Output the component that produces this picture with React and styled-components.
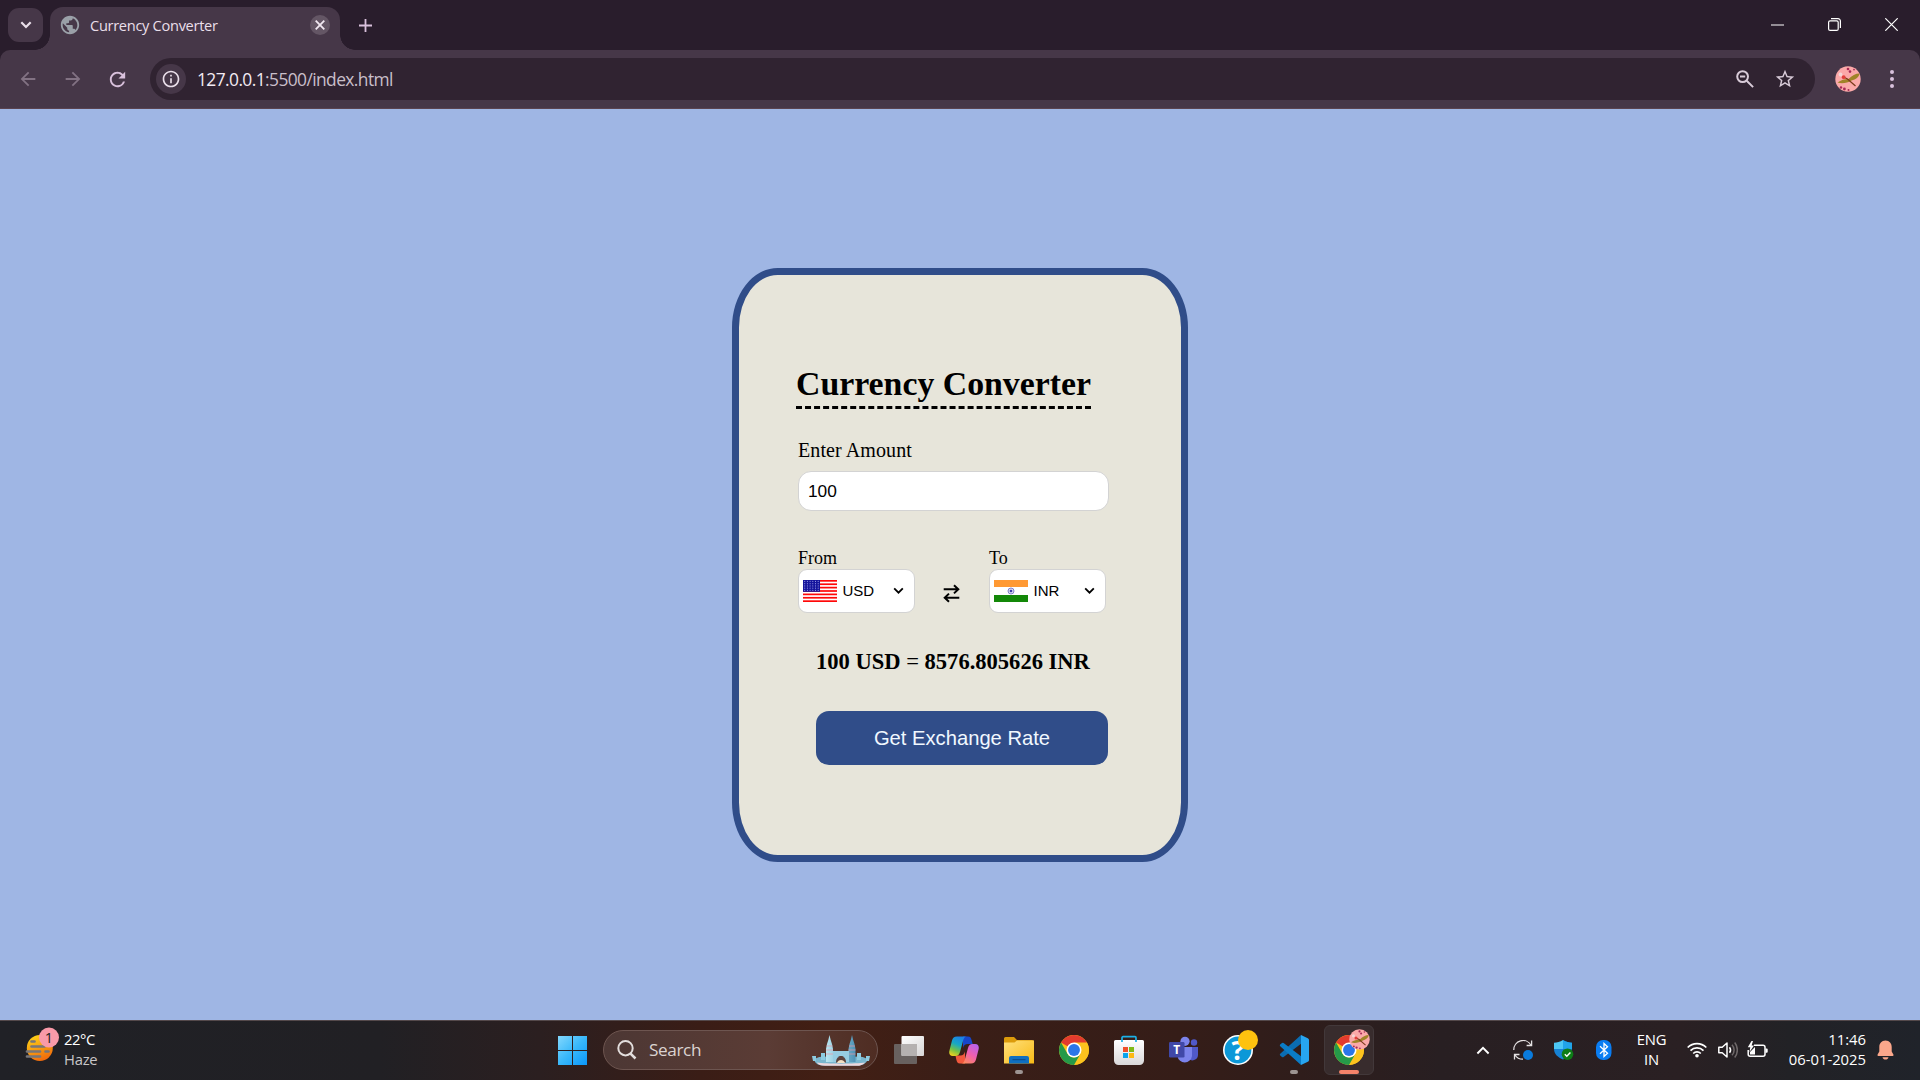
import React from "react";
import styled, { createGlobalStyle } from "styled-components";
import { MdArrowBack, MdArrowForward, MdRefresh, MdPublic, MdStarBorder, MdOutlineInfo } from "react-icons/md";

const ui = `"Open Sans", "Noto Sans", sans-serif`;
const serif = `"Liberation Serif", "Times New Roman", serif`;
const sans = `"Liberation Sans", Arial, sans-serif`;

const GlobalStyle = createGlobalStyle`
  * { box-sizing: border-box; }
  html, body { margin: 0; padding: 0; overflow: hidden; }
  svg { display: block; flex: none; }
  button, input { margin: 0; padding: 0; border: 0; background: none; }
`;

const Screen = styled.div`
  width: 1920px;
  height: 1080px;
  display: flex;
  flex-direction: column;
  overflow: hidden;
`;

/* ---------- browser chrome ---------- */

const TabStrip = styled.div`
  height: 50px;
  flex: none;
  display: flex;
  align-items: flex-start;
  background: #291d2c;
  padding-left: 8px;
`;

const TabSearch = styled.button`
  width: 35px;
  height: 34px;
  margin-top: 8px;
  border-radius: 11px;
  background: #463748;
  display: flex;
  align-items: center;
  justify-content: center;
`;

const Tab = styled.div`
  position: relative;
  width: 290px;
  height: 43px;
  margin: 7px 0 0 7px;
  border-radius: 13px 13px 0 0;
  background: #463748;
  display: flex;
  align-items: center;
  padding: 0 10px 7px 9px;
  &::before, &::after {
    content: "";
    position: absolute;
    bottom: 0;
    width: 15px;
    height: 15px;
  }
  &::before {
    left: -15px;
    background: radial-gradient(circle at 0 0, transparent 14.5px, #463748 15px);
  }
  &::after {
    right: -15px;
    background: radial-gradient(circle at 100% 0, transparent 14.5px, #463748 15px);
  }
`;

const TabTitle = styled.span`
  flex: 1;
  margin-left: 9px;
  font: 14.6px/20px ${ui};
  letter-spacing: -0.3px;
  color: #eadfea;
  white-space: nowrap;
`;

const TabClose = styled.button`
  width: 20px;
  height: 20px;
  border-radius: 50%;
  background: #645665;
  display: flex;
  align-items: center;
  justify-content: center;
`;

const NewTab = styled.button`
  width: 50px;
  height: 50px;
  display: flex;
  align-items: center;
  justify-content: center;
`;

const WindowButtons = styled.div`
  display: flex;
  margin-left: auto;
`;

const WindowButton = styled.button`
  width: 57px;
  height: 49px;
  display: flex;
  align-items: center;
  justify-content: center;
`;

const ToolbarBack = styled.div`
  flex: none;
  background: #291d2c;
`;

const Toolbar = styled.div`
  height: 59px;
  display: flex;
  align-items: center;
  background: #463748;
  border-radius: 10px 10px 0 0;
  border-bottom: 1px solid #5a4350;
  padding: 0 13px 0 5px;
`;

const NavButton = styled.button`
  width: 45px;
  height: 42px;
  display: flex;
  align-items: center;
  justify-content: center;
  color: ${(p) => (p.$dim ? "#827283" : "#d9c1dc")};
`;

const Omnibox = styled.div`
  flex: none;
  width: 1665px;
  height: 42px;
  margin-left: 10px;
  border-radius: 21px;
  background: #302331;
  display: flex;
  align-items: center;
  padding: 0 19px 0 6px;
  color: #d8cbd8;
`;

const SiteInfo = styled.span`
  width: 30px;
  height: 30px;
  border-radius: 50%;
  background: #463748;
  color: #eadfea;
  display: flex;
  align-items: center;
  justify-content: center;
`;

const Url = styled.span`
  flex: 1;
  margin-left: 11px;
  font: 17.4px/24px ${ui};
  letter-spacing: -0.59px;
  color: #c9bfca;
  b { font-weight: 400; color: #f3ebf3; }
`;

const OmniIcon = styled.span`
  width: 22px;
  margin-left: 18px;
  display: flex;
  justify-content: center;
`;

const AvatarSlot = styled.span`
  margin: 0 0 1px 19.5px;
`;

const MenuDots = styled.span`
  margin-left: auto;
  width: 31px;
  display: flex;
  justify-content: center;
`;

/* ---------- converter page ---------- */

const Page = styled.main`
  height: 911px;
  flex: none;
  display: flex;
  align-items: center;
  justify-content: center;
  background: #9fb6e4;
  padding-top: 1px;
`;

const Card = styled.section`
  width: 456px;
  height: 594px;
  border: 7px solid #304d89;
  border-radius: 10%;
  background: #e7e5da;
  padding: 89px 73px 0 59px;
  font-family: ${serif};
  color: #000;
`;

const Title = styled.h1`
  margin: 0 0 0 -2px;
  font: bold 33.8px/40px ${serif};
  white-space: nowrap;
  text-decoration: underline dashed #000 3px;
  text-underline-offset: 11px;
`;

const AmountLabel = styled.label`
  display: block;
  margin-top: 34px;
  font-size: 20px;
  line-height: 24px;
  letter-spacing: 0.1px;
`;

const AmountInput = styled.input`
  display: block;
  width: 311px;
  height: 40px;
  margin-top: 9px;
  padding-left: 9px;
  border: 1px solid #d3d3d3;
  border-radius: 13px;
  background: #fff;
  font: 17.3px/20px ${sans};
  outline: none;
`;

const Pickers = styled.div`
  display: flex;
  margin-top: 37px;
`;

const Picker = styled.div`
  width: 117px;
  font-size: 18px;
  line-height: 21px;
`;

const SelectBox = styled.div`
  height: 44px;
  display: flex;
  align-items: center;
  padding: 0 10px 0 4px;
  border: 1px solid #d3d3d3;
  border-radius: 9px;
  background: #fff;
`;

const SelectValue = styled.span`
  flex: 1;
  margin-left: 5.5px;
  font: 15px/20px ${sans};
`;

const Swap = styled.button`
  width: 74px;
  display: flex;
  justify-content: center;
  padding: 36px 1px 0 0;
`;

const Result = styled.p`
  margin: 35px 0 0 18px;
  font: bold 22.55px/28px ${serif};
  white-space: nowrap;
  span { font-weight: 400; }
`;

const ConvertButton = styled.button`
  display: block;
  width: 292px;
  height: 54px;
  margin: 35px 0 0 18px;
  border-radius: 13px;
  background: #304d89;
  color: #f0f8ff;
  font: 20.2px/24px ${sans};
`;

/* ---------- taskbar ---------- */

const Taskbar = styled.footer`
  height: 60px;
  flex: none;
  display: flex;
  align-items: center;
  padding-bottom: 1px;
  border-top: 1px solid #54494b;
  background: linear-gradient(90deg, #202126 0, #212024 380px, #2b1f20 540px, #3a1d16 700px, #421f14 830px, #3a1e17 960px, #351d18 1180px, #2f1d1b 1300px, #281f22 1440px, #2a2023 1680px, #222226 1790px, #20232a 1920px);
  font-family: ${ui};
  color: #fff;
`;

const Weather = styled.div`
  width: 545px;
  height: 58px;
  padding-left: 25px;
  display: flex;
`;

const WeatherText = styled.div`
  margin: 8px 0 0 3px;
  font-size: 14.8px;
  line-height: 20px;
  letter-spacing: -0.45px;
  div + div { color: #c8c6c8; letter-spacing: -0.25px; }
`;

const TaskCell = styled.div`
  position: relative;
  width: 55px;
  height: 50px;
  display: flex;
  align-items: center;
  justify-content: center;
`;

const ActiveTile = styled.div`
  width: 50px;
  height: 50px;
  border-radius: 6px;
  border: 1px solid #42383a;
  background: #382c2d;
  display: flex;
  align-items: center;
  justify-content: center;
`;

const RunningMark = styled.i`
  position: absolute;
  bottom: 1px;
  left: 50%;
  transform: translateX(-50%);
  width: ${(p) => (p.$active ? 20 : 8)}px;
  height: 4px;
  border-radius: 2px;
  background: ${(p) => (p.$active ? "#f5836a" : "#9d9492")};
`;

const SearchBox = styled.div`
  width: 275px;
  height: 40px;
  margin: 0 3px 0 3px;
  border: 1px solid #6d5550;
  border-radius: 20px;
  background: linear-gradient(90deg, #4c3734, #5b3c35 60%, #50301f00), #4f2d23;
  display: flex;
  align-items: center;
  padding: 0 7px 0 13px;
`;

const SearchText = styled.span`
  flex: 1;
  margin-left: 12px;
  font-size: 17.2px;
  line-height: 24px;
  letter-spacing: -0.4px;
  color: #dbd3d1;
`;

const Tray = styled.div`
  flex: 1;
  height: 58px;
  display: flex;
  align-items: center;
  justify-content: flex-end;
  padding-right: 16px;
`;

const TrayIcon = styled.div`
  width: ${(p) => p.$w}px;
  display: flex;
  justify-content: center;
`;

const TrayText = styled.div`
  width: ${(p) => p.$w}px;
  text-align: ${(p) => p.$align};
  font-size: 14.8px;
  line-height: 20px;
  letter-spacing: ${(p) => p.$track}px;
  padding-bottom: 2px;
`;

/* ---------- drawings ---------- */

const Chevron = ({ w, h, color = "#000", stroke = 2, up }) => (
  <svg width={w} height={h} viewBox="0 0 12 8" fill="none" stroke={color} strokeWidth={stroke}>
    <path d={up ? "M1 6.7 6 1.7l5 5" : "M1.3 1.3 6 6l4.7-4.7"} />
  </svg>
);

const UsFlag = () => (
  <svg width="34" height="24" viewBox="0 0 34 24">
    <rect y="1" width="34" height="22" fill="#fff" />
    {[0, 2, 4, 6, 8, 10, 12].map((i) => (
      <rect key={i} y={1 + i * 1.692} width="34" height="1.692" fill="#ff0808" />
    ))}
    <rect y="1" width="17" height="11.8" fill="#14149b" />
    {[0, 1, 2, 3, 4].map((r) =>
      [0, 1, 2, 3, 4, 5].map((c) => (
        <circle key={`${r}-${c}`} cx={1.7 + c * 2.7} cy={2.4 + r * 2.25} r=".55" fill="#8f8fe0" />
      ))
    )}
  </svg>
);

const IndiaFlag = () => (
  <svg width="34" height="24" viewBox="0 0 34 24">
    <rect y="1" width="34" height="22" fill="#fff" />
    <rect y="1" width="34" height="7" fill="#ff9933" />
    <rect y="16" width="34" height="7" fill="#138808" />
    <circle cx="17" cy="12" r="3" fill="#d9d9f2" stroke="#7676c4" strokeWidth=".9" />
    <circle cx="17" cy="12" r="1.3" fill="#3c3ca8" />
  </svg>
);

const SwapArrows = () => (
  <svg width="17" height="19" viewBox="0 0 17 19" fill="none" stroke="#000" strokeWidth="2">
    <path d="M.7 5.3h14.5M11 1.2l4.3 4.1L11 9.4" />
    <path d="M16.3 13.7H1.8M6 9.6l-4.3 4.1L6 17.8" />
  </svg>
);

const ZoomOut = () => (
  <svg width="18" height="18" viewBox="0 0 18 18" fill="none" stroke="currentColor" strokeWidth="2">
    <circle cx="6.6" cy="6.6" r="5.4" />
    <path d="m10.7 10.7 6.4 6.4M4 6.6h5.2" />
  </svg>
);

const Avatar = ({ size }) => (
  <svg width={size} height={size} viewBox="0 0 26 26">
    <circle cx="13" cy="13" r="12.7" fill="#fba9a9" />
    <g fill="#a62a55">
      <circle cx="13" cy="3" r="1.3" /><circle cx="15" cy="5.6" r="1.3" /><circle cx="19" cy="3.6" r=".9" />
      <circle cx="6" cy="21.5" r="1.2" /><circle cx="9.4" cy="23" r="1.4" /><circle cx="13.5" cy="24" r="1" />
    </g>
    <path d="M2.500 16.500c3.500-2.500 7-3.500 11-3.500 3.500-3.500 7-5.500 11-5.500-.5 3.500-3.500 6-8 7-4 2.500-9.500 3.500-14 2z" fill="#a08327" />
    <path d="m7.500 10.500 5 2.500 8 7" stroke="#7c3b1c" strokeWidth="1.300" fill="none" />
    <circle cx="8.700" cy="11.200" r="1.900" fill="#e2403c" />
    <circle cx="5.500" cy="8.500" r="1.900" fill="#f4d5d5" />
  </svg>
);

const HazeIcon = () => (
  <svg width="36" height="40" viewBox="0 0 36 40" style={{ marginTop: 5 }}>
    <defs>
      <linearGradient id="sun" x1=".3" y1="0" x2=".7" y2="1">
        <stop offset="0" stopColor="#fcd116" /><stop offset="1" stopColor="#f0640c" />
      </linearGradient>
    </defs>
    <circle cx="14.800" cy="22" r="13" fill="url(#sun)" />
    <g stroke="#77767a" strokeWidth="2.700" strokeLinecap="round">
      <path d="M6.500 15.500h3M6.500 20.500h13M2 25.500h13M20.500 25.500h3M2 30.500h13" />
    </g>
    <circle cx="24" cy="11.500" r="10" fill="#f99aa9" />
    <text x="24" y="16.600" textAnchor="middle" fontFamily="Open Sans" fontSize="14.500" fill="#222">1</text>
  </svg>
);

const WindowsLogo = () => (
  <svg width="29" height="29" viewBox="0 0 29 29">
    <defs>
      <linearGradient id="win" gradientUnits="userSpaceOnUse" x1="0" y1="0" x2="29" y2="29">
        <stop offset="0" stopColor="#83d8fd" /><stop offset=".5" stopColor="#39b8fa" /><stop offset="1" stopColor="#0a97fb" />
      </linearGradient>
    </defs>
    <path d="M0 0h14v14H0zM15 0h14v14H15zM0 15h14v14H0zM15 15h14v14H15z" fill="url(#win)" />
  </svg>
);

const SearchGlass = () => (
  <svg width="20" height="20" viewBox="0 0 20 20" fill="none" stroke="#e3dedd" strokeWidth="2">
    <circle cx="8.500" cy="8.200" r="7.200" /><path d="m13.300 13.300 5.200 5.200" strokeWidth="2.500" />
  </svg>
);

const Towers = () => (
  <svg width="58" height="31" viewBox="0 0 58 31">
    <defs>
      <linearGradient id="tower" x1="0" x2="1"><stop offset="0" stopColor="#b9e6f1" /><stop offset="1" stopColor="#4e93b7" /></linearGradient>
    </defs>
    <path d="M2 24c6-3 10-3 16-2h22c6-1 10-1 16 2-2 5-6 6.500-10 6.500H12C7 30.500 3 29 2 24z" fill="#7ab7cf" />
    <path d="M5 27.500c8 1.500 40 1.500 48 0-2 2.600-5 3.300-8 3.300H13c-4 0-7-1-8-3.300z" fill="#efd7dc" />
    <path d="M0 21h4v5H1zM54 21h4l-1 5h-3zM9 18h4v7H9zM45 18h4v7h-4z" fill="#8dcbe0" />
    <path d="M14 27V14l1-5 1.300-4L17.500 0l1.200 5L20 9l1 5v13zM36.500 27V14l1-5 1.300-4L40 0l1.200 5 1.300 4 1 5v13z" fill="url(#tower)" />
    <path d="M14.500 11h6M14 15h7M14 19h7M37 11h6M36.500 15h7M36.500 19h7" stroke="#e796a8" strokeWidth=".7" />
    <path d="M21 16h16v11h-3c0-8-10-8-10 0h-3z" fill="#96cce2" />
    <path d="M24 27.500c0-8.500 10-8.500 10 0z" fill="#5d403b" /><path d="M25 28c1-4 7-4 8 0z" fill="#f3dfc2" />
  </svg>
);

const TaskView = () => (
  <svg width="30" height="28" viewBox="0 0 30 28">
    <defs>
      <linearGradient id="tvl" x2="1" y2="1"><stop offset="0" stopColor="#fff" /><stop offset="1" stopColor="#d7d5d5" /></linearGradient>
    </defs>
    <rect x="0" y="8" width="23" height="20" rx="1" fill="#68615f" />
    <rect x="7.500" y="0" width="22.500" height="20" rx="1" fill="url(#tvl)" />
    <path d="M7.500 8H23v12H8.500a1 1 0 0 1-1-1z" fill="#b5b1b0" />
  </svg>
);

const Copilot = () => (
  <svg width="30" height="28" viewBox="0 0 30 28">
    <defs>
      <linearGradient id="cpa" x1=".6" y1="0" x2=".2" y2="1"><stop offset="0" stopColor="#1b7fe8" /><stop offset=".4" stopColor="#18a9c4" /><stop offset=".7" stopColor="#72c248" /><stop offset="1" stopColor="#f2d21e" /></linearGradient>
      <linearGradient id="cpb" x1=".8" y1="0" x2=".2" y2="1"><stop offset="0" stopColor="#b562ec" /><stop offset=".5" stopColor="#f05fae" /><stop offset="1" stopColor="#fc8b5a" /></linearGradient>
    </defs>
    <path d="M14 .5h5c2.500 0 3 1.500 3.700 4l1 3.500h-5c-2.500 0-4 1.300-4.700 4z" fill="#1746c9" />
    <path d="M16 27.500h-5c-2.500 0-3-1.500-3.700-4l-.8-4h5c2.500 0 3.800-1.500 4.500-4z" fill="#f2583d" />
    <path d="M8 .5h10c-2.500 0-3.300 2-4 4.500L11 16c-.8 2.600-2 4-4.500 4H3.800C.8 20-.3 17.600.4 14.700L3 4.500C3.800 2 5 .5 8 .5z" fill="url(#cpa)" />
    <path d="M22 27.500H12c2.500 0 3.300-2 4-4.500l3-11c.8-2.600 2-4 4.500-4h2.700c3 0 4.100 2.400 3.400 5.300L27 23.500c-.8 2.500-2 4-5 4z" fill="url(#cpb)" />
  </svg>
);

const Folder = () => (
  <svg width="30" height="28" viewBox="0 0 30 28">
    <defs>
      <linearGradient id="fld" x2="1" y2="1"><stop offset="0" stopColor="#ffe07c" /><stop offset="1" stopColor="#f8ba16" /></linearGradient>
    </defs>
    <path d="M0 2.500A1.500 1.500 0 0 1 1.500 1H10l3 3h15a2 2 0 0 1 2 2v6H0z" fill="#dc9b0b" />
    <path d="M0 6.500h10.500L13 4.500h17v23H0z" fill="url(#fld)" />
    <path d="M5 27.500V22a2 2 0 0 1 2-2h16a2 2 0 0 1 2 2v5.500z" fill="#0f6fc0" />
    <path d="M8.500 23.700h13" stroke="#0a4787" strokeWidth="1" />
  </svg>
);

const ChromeLogo = () => (
  <svg width="30" height="30" viewBox="0 0 48 48">
    <circle cx="24" cy="24" r="24" fill="#fbc116" />
    <path d="M24 24 3.220 12A24 24 0 0 1 44.780 12z" fill="#e33b2e" />
    <path d="M24 12h20.780A24 24 0 0 1 24 48l10.400-18z" fill="#fcc31e" />
    <path d="M3.220 12A24 24 0 0 0 24 48l10.400-18A12 12 0 0 1 13.600 30z" fill="#259a49" />
    <circle cx="24" cy="24" r="12" fill="#fff" />
    <circle cx="24" cy="24" r="9.500" fill="#2b76e8" />
  </svg>
);

const Store = () => (
  <svg width="30" height="30" viewBox="0 0 30 30">
    <defs>
      <linearGradient id="str" x2="0" y2="1"><stop offset="0" stopColor="#fff" /><stop offset="1" stopColor="#dad8d9" /></linearGradient>
    </defs>
    <path d="M0 6.500A1.500 1.500 0 0 1 1.500 5h27A1.500 1.500 0 0 1 30 6.500V25.500a4.500 4.500 0 0 1-4.500 4.500h-21A4.500 4.500 0 0 1 0 25.500z" fill="url(#str)" />
    <path d="M8 7V2.700A1 1 0 0 1 9 1.700h12a1 1 0 0 1 1 1V7" fill="none" stroke="#1cb1e6" strokeWidth="1.700" />
    <path d="M9 12h5v5H9z" fill="#f0502a" /><path d="M15 12h5v5h-5z" fill="#7fba18" />
    <path d="M9 18h5v5H9z" fill="#0ba3ec" /><path d="M15 18h5v5h-5z" fill="#fdb913" />
  </svg>
);

const Teams = () => (
  <svg width="30" height="28" viewBox="0 0 30 28">
    <circle cx="25" cy="6.500" r="3.200" fill="#5059c9" />
    <path d="M19 11h10v8a5.500 5.500 0 0 1-10 3z" fill="#5059c9" />
    <circle cx="16" cy="5.300" r="4.600" fill="#7b83eb" />
    <path d="M8.500 11H23v9a7.300 7.300 0 0 1-14.500 0z" fill="#7b83eb" />
    <rect x="0" y="6" width="15.500" height="15.500" rx="1.300" fill="#4048a8" />
    <text x="7.700" y="18.200" textAnchor="middle" fontFamily="Open Sans" fontWeight="700" fontSize="12" fill="#fff">T</text>
  </svg>
);

const Help = () => (
  <svg width="38" height="40" viewBox="0 0 38 40">
    <circle cx="18" cy="20" r="15" fill="#fff" /><circle cx="18" cy="20" r="13.400" fill="#0c98d8" />
    <text x="18" y="29.800" textAnchor="middle" fontFamily="Open Sans" fontWeight="700" fontSize="27" fill="#fff">?</text>
    <circle cx="28" cy="10" r="10" fill="#fec20f" />
  </svg>
);

const VsCode = () => (
  <svg width="30" height="30" viewBox="0 0 30 30">
    <path d="M22 0 1.200 18.800a1.200 1.200 0 0 0 0 1.700L3 22a1.300 1.300 0 0 0 1.600 0L23 8z" fill="#0b6cb1" />
    <path d="M22 30 1.200 11.200a1.200 1.200 0 0 1 0-1.700L3 8a1.300 1.300 0 0 1 1.600 0L23 22z" fill="#0a7cc6" />
    <path d="M22 0l6.800 3.200a2 2 0 0 1 1.200 2v19.600a2 2 0 0 1-1.200 2L22 30z" fill="#27a5f0" />
  </svg>
);

const AppWithAvatar = styled.div`
  position: relative;
  > span { position: absolute; left: 15px; top: -6px; }
`;

const SyncIcon = () => (
  <svg width="20" height="20" viewBox="0 0 20 20" fill="none" stroke="#e4e1e2" strokeWidth="1.300">
    <path d="M.8 10A9.200 9.200 0 0 1 18 5.200M18.600.500v5h-5M1.500 19.500v-5h5M2 15a9.200 9.200 0 0 0 8 4.200" />
    <circle cx="15" cy="15" r="5" fill="#0a7bdc" stroke="none" />
  </svg>
);

const ShieldIcon = () => (
  <svg width="20" height="20" viewBox="0 0 20 20">
    <path d="M9 0c3 2 6 2.700 9 2.700V9c0 5-4 8.500-9 10.500z" fill="#1478cb" />
    <path d="M9 0C6 2 3 2.700 0 2.700V9h9z" fill="#4cc7f4" /><path d="M0 9h9v10.500C4 17.500 0 14 0 9z" fill="#1782d4" />
    <path d="M9 0c3 2 6 2.700 9 2.700V9H9z" fill="#21a4e8" />
    <circle cx="13.500" cy="14.200" r="5.800" fill="#0d7d16" />
    <path d="m10.800 14.200 2 2 3.600-3.700" fill="none" stroke="#fff" strokeWidth="1.400" />
  </svg>
);

const BluetoothIcon = () => (
  <svg width="16" height="20" viewBox="0 0 16 20">
    <rect width="15.500" height="20" rx="7" fill="#0a7df2" />
    <path d="m4 6.300 7.500 7L8 16.500v-13l3.500 3.200-7.500 7" fill="none" stroke="#fff" strokeWidth="1.300" />
  </svg>
);

const WifiIcon = () => (
  <svg width="20" height="16" viewBox="0 0 20 16" fill="none" stroke="#fff" strokeWidth="1.700">
    <path d="M.7 5.500a13.300 13.300 0 0 1 18.600 0M3.500 8.600a9.300 9.300 0 0 1 13 0M6.200 11.500a5.400 5.400 0 0 1 7.600 0" />
    <circle cx="10" cy="13.700" r="1.800" fill="#fff" stroke="none" />
  </svg>
);

const SpeakerIcon = () => (
  <svg width="20" height="18" viewBox="0 0 20 18" fill="none" stroke="#fff" strokeWidth="1.500">
    <path d="M.8 6.200h3.400L9 2v14l-4.800-4.200H.8z" strokeLinejoin="round" />
    <path d="M11.500 6.200c1.300 1.700 1.300 3.900 0 5.600" />
    <path d="M14 3.700c2.800 3 2.800 7.600 0 10.600M16.700 1.500c3.500 4.300 3.500 10.700 0 15" stroke="#6e6869" />
  </svg>
);

const BatteryIcon = () => (
  <svg width="21" height="18" viewBox="0 0 21 18">
    <path d="M7 4.200h9a2 2 0 0 1 2 2v7a2 2 0 0 1-2 2H3.200a2 2 0 0 1-2-2V9" fill="none" stroke="#fff" strokeWidth="1.500" />
    <path d="M3 13.500V11l5-5v7.500zM18.500 7.500h1.200a1 1 0 0 1 1 1v2.300a1 1 0 0 1-1 1h-1.200z" fill="#fff" />
    <path d="M4.500 0 .8 6.300h2.500L2.500 11 7 4.500H4.600L6 0z" fill="#fff" />
  </svg>
);

const BellIcon = () => (
  <svg width="17" height="20" viewBox="0 0 17 20" fill="#fba78b">
    <path d="M8.500.5c4 0 6.200 3 6.200 6.500v4.500l1.800 3.300c.2.600-.1 1.200-.8 1.200H1.300c-.7 0-1-.6-.8-1.200l1.800-3.300V7C2.300 3.500 4.500.5 8.500.5z" />
    <path d="M5.500 17.200h6c-.3 1.500-1.500 2.300-3 2.300s-2.700-.8-3-2.300z" />
  </svg>
);

const BrowserChrome = () => (
  <>
    <TabStrip>
      <TabSearch><Chevron w={12} h={8} color="#eadfea" stroke={2.2} /></TabSearch>
      <Tab>
        <MdPublic size={22} color="#9aa0a8" />
        <TabTitle>Currency Converter</TabTitle>
        <TabClose>
          <svg width="10" height="10" viewBox="0 0 10 10" stroke="#f1e8f1" strokeWidth="1.800"><path d="m.7.7 8.600 8.600M9.300.7.7 9.300" /></svg>
        </TabClose>
      </Tab>
      <NewTab>
        <svg width="13" height="13" viewBox="0 0 13 13" stroke="#d9c1dc" strokeWidth="1.800"><path d="M6.500 0v13M0 6.500h13" /></svg>
      </NewTab>
      <WindowButtons>
        <WindowButton><svg width="13" height="2" viewBox="0 0 13 2"><path d="M0 .5h13v1H0z" fill="#fff" /></svg></WindowButton>
        <WindowButton>
          <svg width="14" height="13" viewBox="0 0 14 13" fill="none" stroke="#fff" strokeWidth="1.200">
            <rect x=".6" y="2.800" width="9.600" height="9.600" rx="1.500" />
            <path d="M3 .6h7a2.400 2.400 0 0 1 2.400 2.400v7" />
          </svg>
        </WindowButton>
        <WindowButton><svg width="13" height="13" viewBox="0 0 13 13" stroke="#fff" strokeWidth="1.200"><path d="m.3.3 12.400 12.400M12.700.3.3 12.700" /></svg></WindowButton>
      </WindowButtons>
    </TabStrip>
    <ToolbarBack>
      <Toolbar>
        <NavButton $dim><MdArrowBack size={22} /></NavButton>
        <NavButton $dim><MdArrowForward size={22} /></NavButton>
        <NavButton><MdRefresh size={23} /></NavButton>
        <Omnibox>
          <SiteInfo><MdOutlineInfo size={20} /></SiteInfo>
          <Url><b>127.0.0.1</b>:5500/index.html</Url>
          <OmniIcon><ZoomOut /></OmniIcon>
          <OmniIcon><MdStarBorder size={22} /></OmniIcon>
        </Omnibox>
        <AvatarSlot><Avatar size={26} /></AvatarSlot>
        <MenuDots>
          <svg width="4" height="18" viewBox="0 0 4 18" fill="#d9c1dc"><circle cx="2" cy="2" r="2" /><circle cx="2" cy="9" r="2" /><circle cx="2" cy="16" r="2" /></svg>
        </MenuDots>
      </Toolbar>
    </ToolbarBack>
  </>
);

const CurrencyPicker = ({ label, flag, code }) => (
  <Picker>
    {label}
    <SelectBox>
      {flag}
      <SelectValue>{code}</SelectValue>
      <Chevron w={11} h={7.5} />
    </SelectBox>
  </Picker>
);

const Converter = () => (
  <Page>
    <Card>
      <Title>Currency Converter</Title>
      <AmountLabel>Enter Amount</AmountLabel>
      <AmountInput defaultValue="100" />
      <Pickers>
        <CurrencyPicker label="From" flag={<UsFlag />} code="USD" />
        <Swap><SwapArrows /></Swap>
        <CurrencyPicker label="To" flag={<IndiaFlag />} code="INR" />
      </Pickers>
      <Result>100 USD <span>=</span> 8576.805626 INR</Result>
      <ConvertButton>Get Exchange Rate</ConvertButton>
    </Card>
  </Page>
);

const SystemBar = () => (
  <Taskbar>
    <Weather>
      <HazeIcon />
      <WeatherText><div>22°C</div><div>Haze</div></WeatherText>
    </Weather>
    <TaskCell><WindowsLogo /></TaskCell>
    <SearchBox>
      <SearchGlass />
      <SearchText>Search</SearchText>
      <Towers />
    </SearchBox>
    <TaskCell><TaskView /></TaskCell>
    <TaskCell><Copilot /></TaskCell>
    <TaskCell><Folder /><RunningMark /></TaskCell>
    <TaskCell><ChromeLogo /></TaskCell>
    <TaskCell><Store /></TaskCell>
    <TaskCell><Teams /></TaskCell>
    <TaskCell><Help /></TaskCell>
    <TaskCell><VsCode /><RunningMark /></TaskCell>
    <TaskCell>
      <ActiveTile>
        <AppWithAvatar><ChromeLogo /><span><Avatar size={21} /></span></AppWithAvatar>
      </ActiveTile>
      <RunningMark $active />
    </TaskCell>
    <Tray>
      <TrayIcon $w={40}><Chevron w={14} h={9} color="#fff" stroke={1.7} up /></TrayIcon>
      <TrayIcon $w={40}><SyncIcon /></TrayIcon>
      <TrayIcon $w={42}><ShieldIcon /></TrayIcon>
      <TrayIcon $w={38}><BluetoothIcon /></TrayIcon>
      <TrayText $w={57} $align="center" $track={-0.2}>ENG<br />IN</TrayText>
      <TrayIcon $w={34}><WifiIcon /></TrayIcon>
      <TrayIcon $w={27}><SpeakerIcon /></TrayIcon>
      <TrayIcon $w={33}><BatteryIcon /></TrayIcon>
      <TrayText $w={92} $align="right" $track={0}>11:46<br />06-01-2025</TrayText>
      <TrayIcon $w={38}><BellIcon /></TrayIcon>
    </Tray>
  </Taskbar>
);

export default function App() {
  return (
    <Screen>
      <GlobalStyle />
      <BrowserChrome />
      <Converter />
      <SystemBar />
    </Screen>
  );
}
